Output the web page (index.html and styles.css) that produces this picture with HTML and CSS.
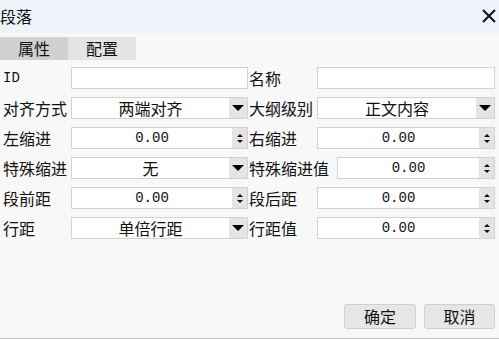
FILE: index.html
```html
<!DOCTYPE html>
<html lang="zh">
<head>
<meta charset="utf-8">
<title>段落</title>
<link rel="stylesheet" href="styles.css">
</head>
<body>
<div class="dialog">
  <div class="titlebar">
    <span class="title">段落</span>
    <svg class="close" width="14" height="14" viewBox="0 0 14 14"><path d="M1 1L13 13M13 1L1 13" stroke="#111" stroke-width="2" fill="none"/></svg>
  </div>
  <div class="tabs">
    <div class="tab active">属性</div>
    <div class="tab">配置</div>
  </div>
  <div class="form">
    <div class="row">
      <div class="half left"><span class="label mono">ID</span><div class="field"><span class="value"></span></div></div>
      <div class="half right"><span class="label">名称</span><div class="field"><span class="value"></span></div></div>
    </div>
    <div class="row">
      <div class="half left"><span class="label">对齐方式</span><div class="field"><span class="value">两端对齐</span><span class="btn drop"><i class="tri-down"></i></span></div></div>
      <div class="half right"><span class="label">大纲级别</span><div class="field"><span class="value">正文内容</span><span class="btn drop"><i class="tri-down"></i></span></div></div>
    </div>
    <div class="row">
      <div class="half left"><span class="label">左缩进</span><div class="field"><span class="value mono">0.00</span><span class="btn spin"><i class="s-up"></i><i class="s-down"></i></span></div></div>
      <div class="half right"><span class="label">右缩进</span><div class="field"><span class="value mono">0.00</span><span class="btn spin"><i class="s-up"></i><i class="s-down"></i></span></div></div>
    </div>
    <div class="row">
      <div class="half left"><span class="label">特殊缩进</span><div class="field"><span class="value">无</span><span class="btn drop"><i class="tri-down"></i></span></div></div>
      <div class="half right"><span class="label wide">特殊缩进值</span><div class="field"><span class="value mono">0.00</span><span class="btn spin"><i class="s-up"></i><i class="s-down"></i></span></div></div>
    </div>
    <div class="row">
      <div class="half left"><span class="label">段前距</span><div class="field"><span class="value mono">0.00</span><span class="btn spin"><i class="s-up"></i><i class="s-down"></i></span></div></div>
      <div class="half right"><span class="label">段后距</span><div class="field"><span class="value mono">0.00</span><span class="btn spin"><i class="s-up"></i><i class="s-down"></i></span></div></div>
    </div>
    <div class="row">
      <div class="half left"><span class="label">行距</span><div class="field"><span class="value">单倍行距</span><span class="btn drop"><i class="tri-down"></i></span></div></div>
      <div class="half right"><span class="label">行距值</span><div class="field"><span class="value mono">0.00</span><span class="btn spin"><i class="s-up"></i><i class="s-down"></i></span></div></div>
    </div>
  </div>
  <div class="footer">
    <button class="pbtn ok">确定</button>
    <button class="pbtn cancel">取消</button>
  </div>
</div>
</body>
</html>
```
FILE: styles.css
```css
html, body {
  margin: 0;
  padding: 0;
}
body {
  width: 499px;
  height: 339px;
  overflow: hidden;
  background: #f8f8f8;
  font-family: "Noto Sans CJK SC", "Noto Sans", sans-serif;
  font-size: 16px;
  color: #111;
}
.dialog {
  height: 339px;
  display: flex;
  flex-direction: column;
  box-sizing: border-box;
  border-bottom: 1px solid #c6c6c6;
}
.titlebar {
  height: 33px;
  background: #eef2fa;
  display: flex;
  align-items: center;
  justify-content: space-between;
  padding: 0 3px 0 0;
  flex: none;
}
.title {
  line-height: 33px;
  margin-top: -1px;
}
.close {
  margin-top: -2px;
}
.tabs {
  margin-top: 4px;
  height: 23px;
  display: flex;
  flex: none;
}
.tab {
  width: 68px;
  height: 23px;
  line-height: 23px;
  text-align: center;
  background: #e4e4e4;
}
.tab.active {
  background: #d0d0d0;
}
.form {
  margin-top: 7px;
  display: flex;
  flex-direction: column;
  gap: 8px;
  padding-right: 4px;
}
.row {
  display: flex;
  gap: 1px;
  height: 22px;
}
.half {
  display: flex;
  align-items: center;
}
.half.left {
  width: 248px;
  padding-left: 3px;
  box-sizing: border-box;
}
.half.right {
  flex: 1;
}
.label {
  min-width: 68px;
  padding-right: 4px;
  box-sizing: border-box;
  white-space: nowrap;
  line-height: 22px;
}
.label.wide {
  padding-right: 8px;
}
.half.left .label {
  width: 68px;
  padding-right: 0;
}
.mono {
  font-family: "Liberation Mono", "DejaVu Sans Mono", monospace;
  font-size: 14px;
}
.field {
  flex: 1;
  height: 22px;
  display: flex;
  background: #fff;
  border: 1px solid #d2d2d2;
  box-sizing: border-box;
}
.value {
  flex: 1;
  text-align: center;
  line-height: 20px;
}
.btn {
  width: 18px;
  background: #e4e4e4;
  display: flex;
  flex-direction: column;
  align-items: center;
  justify-content: center;
}
.btn.spin {
  width: 15px;
  gap: 3px;
}
.tri-down {
  width: 0;
  height: 0;
  border-left: 6px solid transparent;
  border-right: 6px solid transparent;
  border-top: 6px solid #000;
}
.s-up {
  width: 0;
  height: 0;
  border-left: 3px solid transparent;
  border-right: 3px solid transparent;
  border-bottom: 3px solid #111;
}
.s-down {
  width: 0;
  height: 0;
  border-left: 3px solid transparent;
  border-right: 3px solid transparent;
  border-top: 3px solid #111;
}
.footer {
  margin-top: auto;
  display: flex;
  justify-content: flex-end;
  gap: 8px;
  padding: 0 4px 9px 0;
}
.pbtn {
  height: 25px;
  width: 72px;
  border: 1px solid #cfcfcf;
  border-radius: 3px;
  background: #e6e6e6;
  font-family: "Noto Sans CJK SC", "Noto Sans", sans-serif;
  font-size: 16px;
  color: #111;
  padding: 0;
  line-height: 23px;
}
.pbtn.cancel {
  width: 71px;
}
```
